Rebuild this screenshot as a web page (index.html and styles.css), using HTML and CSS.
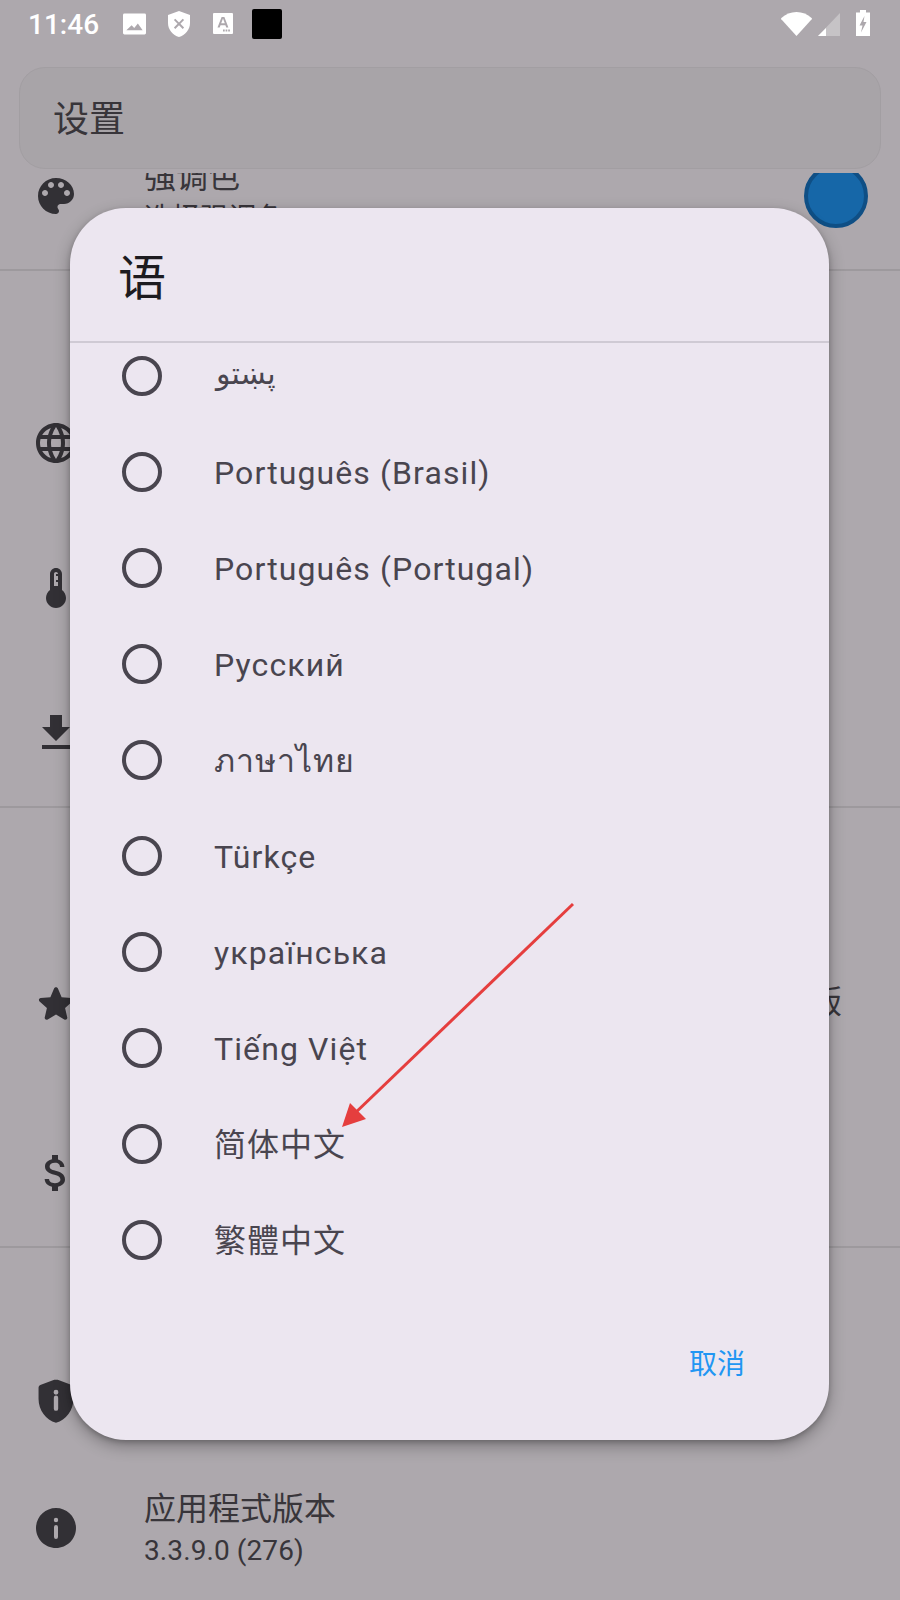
FILE: index.html
```html
<!DOCTYPE html>
<html lang="zh-CN">
<head>
  <meta charset="UTF-8" />
  <meta name="viewport" content="width=device-width, initial-scale=1.0"/>
  <title>设置</title>
  <link rel="stylesheet" href="styles.css">
</head>
<body>
  <div class="status-bar">
    <span class="clock">11:46</span>
    <svg class="st-icon st-image" viewBox="0 0 24 22"><path fill-rule="evenodd" d="M1.5 0h21A1.5 1.5 0 0 1 24 1.5v19a1.5 1.5 0 0 1-1.5 1.5h-21A1.5 1.5 0 0 1 0 20.500v-19A1.500 1.500 0 0 1 1.500 0zM3.500 17.500h17L15.500 10.500l-3.800 4.600-2.700-2.800z"/></svg>
    <svg class="st-icon st-shield" viewBox="0 0 22 26"><path fill-rule="evenodd" d="M11 0 0 4v8c0 6.500 4.700 12.400 11 14 6.300-1.600 11-7.500 11-14V4zM7.300 7.700l3.700 3.700 3.700-3.700 1.400 1.400-3.700 3.700 3.700 3.700-1.400 1.400-3.700-3.700-3.700 3.700-1.400-1.400 3.700-3.700-3.700-3.700z"/></svg>
    <svg class="st-icon st-font" viewBox="0 0 20 21"><path fill-rule="evenodd" d="M1 0h18a1 1 0 0 1 1 1v19a1 1 0 0 1-1 1H1a1 1 0 0 1-1-1V1a1 1 0 0 1 1-1zM8.600 4 4.500 14.500h2.200l.8-2.300h4.900l.8 2.300h2.200L11.400 4zM8.200 10.300l1.800-4.800 1.800 4.800zM10 16.500v2h1.700v-2zM12.600 16.500v2h1.700v-2zM15.200 16.500v2h1.700v-2z"/></svg>
    <span class="st-black"></span>
    <span class="st-right">
      <svg class="st-wifi" viewBox="0 0 31 24"><path d="M15.500 24 .3 7.200a1 1 0 0 1 .1-1.300C4.500 2.200 9.800 0 15.500 0s11 2.200 15.100 5.900a1 1 0 0 1 .1 1.300z"/></svg>
      <svg class="st-signal" viewBox="0 0 22 23"><path class="dim" d="M22 0v23H0z"/><path d="M8 15v8H0z"/></svg>
      <svg class="st-battery" viewBox="0 0 14 26"><path fill-rule="evenodd" d="M4 0h6v2.500h4V26H0V2.500h4zM8.500 6 3.500 15.500h3L5 22.500l5.500-10.500h-3z"/></svg>
    </span>
  </div>

  <div class="search-bar">设置</div>

  <div class="settings">
    <div class="settings-inner">
      <div class="row">
        <svg class="icon" viewBox="0 0 24 24"><path fill-rule="evenodd" d="M12 3c-4.970 0-9 4.030-9 9s4.030 9 9 9c.830 0 1.500-.670 1.500-1.500 0-.390-.150-.740-.390-1.010-.230-.260-.380-.610-.380-.990 0-.830.670-1.500 1.500-1.500H16c2.760 0 5-2.240 5-5 0-4.420-4.030-8-9-8zm-5.500 9c-.830 0-1.500-.670-1.500-1.500S5.670 9 6.500 9 8 9.670 8 10.500 7.330 12 6.500 12zm3-4C8.670 8 8 7.330 8 6.500S8.670 5 9.500 5s1.500.670 1.500 1.500S10.330 8 9.500 8zm5 0c-.830 0-1.500-.670-1.500-1.500S13.670 5 14.500 5s1.500.670 1.500 1.500S15.330 8 14.500 8zm3 4c-.830 0-1.500-.670-1.500-1.500S16.670 9 17.500 9s1.500.670 1.500 1.500-.670 1.500-1.500 1.500z"/></svg>
        <div class="row-text">
          <div class="row-title">强调色</div>
          <div class="row-sub">选择强调色</div>
        </div>
        <span class="accent-dot"></span>
      </div>
      <div class="divider"></div>
      <div class="section-head"></div>
      <div class="row">
        <svg class="icon" viewBox="0 0 24 24"><path fill-rule="evenodd" d="M11.990 2C6.470 2 2 6.480 2 12s4.470 10 9.990 10C17.520 22 22 17.520 22 12S17.520 2 11.990 2zm6.930 6h-2.950c-.320-1.250-.780-2.450-1.380-3.560 1.840.630 3.370 1.910 4.330 3.560zM12 4.040c.830 1.200 1.480 2.530 1.910 3.960h-3.820c.430-1.430 1.080-2.760 1.910-3.960zM4.260 14C4.100 13.360 4 12.690 4 12s.100-1.360.260-2h3.380c-.080.660-.140 1.320-.140 2 0 .680.060 1.340.140 2H4.260zm.820 2h2.950c.320 1.250.780 2.450 1.380 3.560-1.840-.630-3.370-1.900-4.330-3.560zm2.950-8H5.080c.960-1.660 2.490-2.930 4.330-3.560C8.810 5.550 8.350 6.750 8.030 8zM12 19.960c-.830-1.200-1.480-2.530-1.910-3.960h3.820c-.430 1.430-1.080 2.760-1.910 3.960zM14.340 14H9.660c-.090-.660-.160-1.320-.160-2 0-.680.070-1.350.160-2h4.680c.090.650.160 1.320.160 2 0 .680-.070 1.340-.160 2zm.250 5.560c.600-1.110 1.060-2.310 1.380-3.560h2.950c-.960 1.650-2.490 2.930-4.330 3.560zM16.360 14c.080-.660.140-1.320.140-2 0-.680-.060-1.340-.140-2h3.380c.160.640.260 1.310.260 2s-.100 1.360-.260 2h-3.380z"/></svg>
      </div>
      <div class="row">
        <svg class="icon" viewBox="0 0 24 24"><path fill-rule="evenodd" d="M15 13V5c0-1.660-1.340-3-3-3S9 3.340 9 5v8c-1.210.910-2 2.370-2 4 0 2.760 2.240 5 5 5s5-2.240 5-5c0-1.630-.790-3.090-2-4zm-4-8c0-.550.450-1 1-1s1 .450 1 1h-1v1h1v2h-1v1h1v2h-2V5z"/></svg>
      </div>
      <div class="row">
        <svg class="icon" viewBox="0 0 24 24"><path d="M19 9h-4V3H9v6H5l7 7 7-7zM5 18v2h14v-2H5z"/></svg>
      </div>
      <div class="divider"></div>
      <div class="section-head"></div>
      <div class="row row-tall">
        <svg class="icon" viewBox="0 0 24 24"><path d="M12 17.270l4.150 2.510c.760.460 1.690-.220 1.490-1.080l-1.100-4.720 3.670-3.180c.670-.580.310-1.680-.570-1.750l-4.830-.410-1.890-4.460c-.340-.810-1.500-.810-1.840 0L9.190 8.630l-4.830.410c-.880.070-1.240 1.170-.57 1.750l3.670 3.180-1.100 4.720c-.200.860.730 1.540 1.490 1.080l4.150-2.500z"/></svg>
        <span class="row-trail">版</span>
      </div>
      <div class="row">
        <svg class="icon" viewBox="0 0 24 24"><path d="M11.800 10.900c-2.270-.590-3-1.200-3-2.150 0-1.090 1.010-1.850 2.700-1.850 1.780 0 2.440.850 2.500 2.100h2.210c-.070-1.720-1.120-3.300-3.210-3.810V3h-3v2.160c-1.940.420-3.500 1.680-3.500 3.610 0 2.310 1.910 3.460 4.700 4.130 2.500.600 3 1.480 3 2.410 0 .690-.490 1.790-2.700 1.790-2.060 0-2.870-.920-2.980-2.100h-2.200c.120 2.190 1.760 3.420 3.680 3.830V21h3v-2.150c1.950-.370 3.500-1.500 3.500-3.550 0-2.840-2.430-3.810-4.700-4.400z"/></svg>
      </div>
      <div class="divider"></div>
      <div class="section-head"></div>
      <div class="row row-short">
        <svg class="icon" viewBox="1 1 22 22"><path fill-rule="evenodd" d="M11.200 2.300 4.800 4.700a1.200 1.200 0 0 0-.8 1.100v5.300c0 5.050 3.410 9.760 8 10.910 4.590-1.150 8-5.860 8-10.910V5.800a1.200 1.200 0 0 0-.8-1.100l-6.400-2.400a1.200 1.200 0 0 0-.6 0zM11 10.500a1 1 0 0 1 2 0v5a1 1 0 0 1-2 0zM12 6.900a1.100 1.100 0 1 1 0 2.200 1.100 1.100 0 0 1 0-2.200z"/></svg>
      </div>
      <div class="row">
        <svg class="icon" viewBox="0 0 24 24"><path fill-rule="evenodd" d="M12 2C6.480 2 2 6.480 2 12s4.480 10 10 10 10-4.480 10-10S17.520 2 12 2zM11 11.500a1 1 0 0 1 2 0v5a1 1 0 0 1-2 0zM12 6.900a1.100 1.100 0 1 1 0 2.200 1.100 1.100 0 0 1 0-2.200z"/></svg>
        <div class="row-text">
          <div class="row-title">应用程式版本</div>
          <div class="row-sub">3.3.9.0 (276)</div>
        </div>
      </div>
    </div>
  </div>

  <div class="dialog">
    <div class="dialog-title">语</div>
    <div class="dialog-list">
      <div class="lang-items">
        <div class="lang"><span class="radio"></span><span class="lang-pashto">پښتو</span></div>
        <div class="lang"><span class="radio"></span><span class="lang-latin">Português (Brasil)</span></div>
        <div class="lang"><span class="radio"></span><span class="lang-latin">Português (Portugal)</span></div>
        <div class="lang"><span class="radio"></span><span class="lang-latin">Русский</span></div>
        <div class="lang"><span class="radio"></span><span>ภาษาไทย</span></div>
        <div class="lang"><span class="radio"></span><span class="lang-latin">Türkçe</span></div>
        <div class="lang"><span class="radio"></span><span class="lang-latin">українська</span></div>
        <div class="lang"><span class="radio"></span><span class="lang-latin">Tiếng Việt</span></div>
        <div class="lang"><span class="radio"></span><span class="lang-cjk">简体中文</span></div>
        <div class="lang"><span class="radio"></span><span class="lang-cjk">繁體中文</span></div>
      </div>
    </div>
    <div class="dialog-actions"><span class="cancel">取消</span></div>
  </div>

  <!-- red annotation arrow drawn over the screenshot -->
  <svg class="arrow" viewBox="0 0 900 1600">
    <line x1="573" y1="904" x2="352" y2="1116" />
    <polygon points="342,1127 350,1103 366,1119" />
  </svg>
</body>
</html>
```

FILE: styles.css
```css
* {
  box-sizing: border-box;
}
html, body {
  margin: 0;
  height: 1600px;
  overflow: hidden;
}
body {
  position: relative;
  background: #ada8ad;
  font-family: Roboto, 'Noto Sans CJK SC', 'DejaVu Sans', sans-serif;
  color: #38353a;
}

/* status bar */
.status-bar {
  height: 67px;
  display: flex;
  align-items: flex-start;
  padding: 0 30px 0 28px;
  fill: #fff;
  color: #fff;
}
.clock {
  font-size: 28px;
  font-weight: 500;
  line-height: 50px;
  width: 95px;
}
.st-icon {
  display: block;
}
.st-image {
  width: 23px;
  height: 22px;
  margin-top: 13px;
}
.st-shield {
  width: 22px;
  height: 26px;
  margin: 11px 0 0 22px;
}
.st-font {
  width: 20px;
  height: 21px;
  margin: 13px 0 0 23px;
}
.st-black {
  width: 30px;
  height: 30px;
  margin: 9px 0 0 19px;
  background: #000;
  border-radius: 2px;
}
.st-right {
  margin-left: auto;
  display: flex;
  align-items: flex-start;
}
.st-wifi {
  width: 31px;
  height: 24px;
  margin-top: 12px;
}
.st-signal {
  width: 22px;
  height: 23px;
  margin: 13px 0 0 6px;
}
.st-signal .dim {
  fill: #c6c3c6;
}
.st-battery {
  width: 14px;
  height: 26px;
  margin: 10px 0 0 16px;
}

/* top search bar */
.search-bar {
  height: 102px;
  margin: 0 19px;
  padding: 0 0 4px 33px;
  display: flex;
  align-items: center;
  background: #a8a4a8;
  border: 1px solid #a29ea2;
  border-radius: 26px;
  font-size: 36px;
  color: #38353a;
}

/* settings list behind the dialog */
.settings {
  height: 1427px;
  margin-top: 4px;
  overflow: hidden;
}
.settings-inner {
  margin-top: -50px;
}
.row {
  height: 145px;
  display: flex;
  align-items: center;
  padding: 0 32px;
}
.row-tall {
  height: 193px;
}
.row-short {
  height: 108px;
}
.icon {
  width: 48px;
  height: 48px;
  flex: none;
  fill: #323035;
}
.row-text {
  margin-left: 64px;
  padding-top: 4px;
  flex: 1;
}
.row-title {
  font-size: 32px;
  line-height: 42px;
}
.row-sub {
  font-size: 28px;
  line-height: 42px;
  letter-spacing: 0.1px;
}
.row-trail {
  margin: 0 26px 10px auto;
  font-size: 32px;
}
.accent-dot {
  width: 64px;
  height: 64px;
  border-radius: 50%;
  background: #1667a8;
  border: 4px solid #0f4f85;
}
.divider {
  height: 2px;
  margin-top: 1px;
  background: #9d999d;
}
.section-head {
  height: 99px;
}

/* language dialog */
.dialog {
  position: absolute;
  left: 70px;
  top: 208px;
  width: 759px;
  height: 1232px;
  display: flex;
  flex-direction: column;
  background: #ece6f0;
  border-radius: 56px;
  box-shadow: 0 6px 16px rgba(0,0,0,0.3), 0 2px 5px rgba(0,0,0,0.2);
  overflow: hidden;
}
.dialog-title {
  height: 135px;
  flex: none;
  padding: 41px 0 0 48px;
  font-size: 48px;
  line-height: 60px;
  color: #1d1b20;
  border-bottom: 2px solid #cfcad4;
}
.dialog-list {
  height: 945px;
  flex: none;
  overflow: hidden;
}
.lang-items {
  margin-top: -15px;
}
.lang {
  height: 96px;
  display: flex;
  align-items: center;
  padding-left: 52px;
  font-size: 32px;
  letter-spacing: 1px;
  color: #49454f;
}
.lang-latin {
  letter-spacing: 1.1px;
  margin-top: 2px;
}
.lang-pashto {
  font-size: 30px;
  margin: 0 0 6px 2px;
}
.lang-cjk {
  margin-bottom: 4px;
}
.radio {
  width: 40px;
  height: 40px;
  flex: none;
  margin-right: 52px;
  border: 4px solid #49454f;
  border-radius: 50%;
}
.dialog-actions {
  flex: 1;
  display: flex;
  justify-content: flex-end;
  padding: 57px 84px 0 0;
}
.cancel {
  font-size: 28px;
  line-height: 40px;
  color: #2196f3;
}

/* annotation */
.arrow {
  position: absolute;
  left: 0;
  top: 0;
  width: 900px;
  height: 1600px;
}
.arrow line {
  stroke: #e53e3e;
  stroke-width: 3;
}
.arrow polygon {
  fill: #e53e3e;
}
```
